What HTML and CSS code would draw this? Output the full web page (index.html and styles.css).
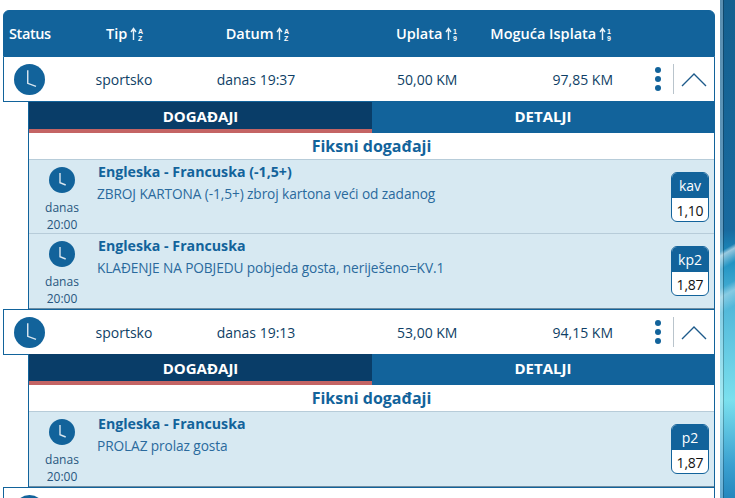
FILE: index.html
```html
<!DOCTYPE html>
<html lang="bs">
<head>
<meta charset="utf-8">
<title>Listići</title>
<link rel="stylesheet" href="styles.css">
</head>
<body>
<div class="page">
  <main class="list">
    <div class="head">
      <div class="c-status">Status</div>
      <div class="c-tip">Tip <svg class="sort" viewBox="0 0 14 14"><path d="M3.5 13V2.5M1 5l2.5-3.5L6 5"/><text x="8" y="6.5" class="sort-t">A</text><text x="8" y="13.5" class="sort-t">Z</text></svg></div>
      <div class="c-date">Datum <svg class="sort" viewBox="0 0 14 14"><path d="M3.5 13V2.5M1 5l2.5-3.5L6 5"/><text x="8" y="6.5" class="sort-t">A</text><text x="8" y="13.5" class="sort-t">Z</text></svg></div>
      <div class="c-pay">Uplata <svg class="sort" viewBox="0 0 14 14"><path d="M3.5 13V2.5M1 5l2.5-3.5L6 5"/><text x="8" y="6.5" class="sort-t">1</text><text x="8" y="13.5" class="sort-t">9</text></svg></div>
      <div class="c-win">Moguća Isplata <svg class="sort" viewBox="0 0 14 14"><path d="M3.5 13V2.5M1 5l2.5-3.5L6 5"/><text x="8" y="6.5" class="sort-t">1</text><text x="8" y="13.5" class="sort-t">9</text></svg></div>
    </div>

    <div class="row">
      <div class="c-status"><svg class="clock big" viewBox="0 0 30 30"><circle cx="15" cy="15" r="15"/><path d="M13.3 6V18.7L21.3 21.7"/></svg></div>
      <div class="c-tip">sportsko</div>
      <div class="c-date">danas 19:37</div>
      <div class="c-pay">50,00 KM</div>
      <div class="c-win">97,85 KM</div>
      <div class="actions">
        <span class="dots"><i></i><i></i><i></i></span>
        <span class="sep"></span>
        <svg class="chev" viewBox="0 0 26 16"><path d="M1 15 13 3l12 12"/></svg>
      </div>
    </div>
    <section class="detail">
      <div class="tabs"><div class="tab active">DOGAĐAJI</div><div class="tab">DETALJI</div></div>
      <h2 class="fixed">Fiksni događaji</h2>
      <div class="event">
        <div class="when"><svg class="clock small" viewBox="0 0 26 26"><circle cx="13" cy="13" r="13"/><path d="M11 6V15.7L16.7 18"/></svg><span>danas</span><span>20:00</span></div>
        <div class="info"><h3>Engleska - Francuska (-1,5+)</h3><p>ZBROJ KARTONA (-1,5+) zbroj kartona veći od zadanog</p></div>
        <div class="odd"><b>kav</b><span>1,10</span></div>
      </div>
      <div class="event">
        <div class="when"><svg class="clock small" viewBox="0 0 26 26"><circle cx="13" cy="13" r="13"/><path d="M11 6V15.7L16.7 18"/></svg><span>danas</span><span>20:00</span></div>
        <div class="info"><h3>Engleska - Francuska</h3><p>KLAĐENJE NA POBJEDU pobjeda gosta, neriješeno=KV.1</p></div>
        <div class="odd"><b>kp2</b><span>1,87</span></div>
      </div>
    </section>

    <div class="row">
      <div class="c-status"><svg class="clock big" viewBox="0 0 30 30"><circle cx="15" cy="15" r="15"/><path d="M13.3 6V18.7L21.3 21.7"/></svg></div>
      <div class="c-tip">sportsko</div>
      <div class="c-date">danas 19:13</div>
      <div class="c-pay">53,00 KM</div>
      <div class="c-win">94,15 KM</div>
      <div class="actions">
        <span class="dots"><i></i><i></i><i></i></span>
        <span class="sep"></span>
        <svg class="chev" viewBox="0 0 26 16"><path d="M1 15 13 3l12 12"/></svg>
      </div>
    </div>
    <section class="detail">
      <div class="tabs"><div class="tab active">DOGAĐAJI</div><div class="tab">DETALJI</div></div>
      <h2 class="fixed">Fiksni događaji</h2>
      <div class="event">
        <div class="when"><svg class="clock small" viewBox="0 0 26 26"><circle cx="13" cy="13" r="13"/><path d="M11 6V15.7L16.7 18"/></svg><span>danas</span><span>20:00</span></div>
        <div class="info"><h3>Engleska - Francuska</h3><p>PROLAZ prolaz gosta</p></div>
        <div class="odd"><b>p2</b><span>1,87</span></div>
      </div>
    </section>

    <div class="row">
      <div class="c-status"><svg class="clock big" viewBox="0 0 30 30"><circle cx="15" cy="15" r="15"/><path d="M13.3 6V18.7L21.3 21.7"/></svg></div>
    </div>
  </main>
  <aside class="desk"></aside>
</div>
</body>
</html>
```
FILE: styles.css
```css
* { box-sizing: border-box; }
html, body { margin: 0; height: 100%; overflow: hidden; background: #fff; }
body { font-family: "Open Sans", "Noto Sans", sans-serif; font-size: 14px; color: #0f3f66; }
.page { display: flex; height: 498px; overflow: hidden; }
.list { width: 712px; margin-left: 3px; padding-top: 10px; flex: none; }
.desk { flex: 1; margin-left: 5px; background:
  linear-gradient(90deg, rgba(255,255,255,.3) 3px, rgba(0,0,0,.25) 3px, rgba(0,0,0,.25) 4px, transparent 4px),
  linear-gradient(150deg, transparent 218px, rgba(255,255,255,.55) 222px, transparent 234px),
  linear-gradient(150deg, transparent 250px, rgba(255,255,255,.35) 258px, transparent 272px),
  linear-gradient(180deg, #14608f 0, #186a9f 230px, #1c8fc0 258px, #4fb5d8 300px, #7be0ee 400px, #3aa0d0 465px, #2487bd 498px); }
.head, .row { display: grid; grid-template-columns: 76px 90px 174px 136px 133px 1fr; align-items: center; border: 1px solid #12639b; }
.head { height: 47px; background: #12639b; border-radius: 6px 6px 0 0; color: #fff; font-weight: 600; font-size: 14.5px; }
.row { height: 45px; background: #fff; border-top: 0; font-size: 14px; }
.detail + .row { height: 46px; margin-bottom: -1px; border-top: 1px solid #12639b; }
.c-tip, .c-date { text-align: center; white-space: nowrap; }
.row .c-tip, .row .c-date { padding-right: 2px; }
.head .c-date { padding-left: 2px; }
.head .c-status { padding-left: 5px; letter-spacing: -.4px; }
.row .c-status { padding-left: 10px; }
.c-pay { padding-left: 52px; white-space: nowrap; }
.row .c-pay { padding-left: 53px; }
.c-win { text-align: right; white-space: nowrap; }
.sort { width: 14px; height: 14px; margin-left: -1px; vertical-align: -2px; }
.sort path { stroke: #e8f2f8; fill: none; stroke-width: 1.4; }
.sort-t { font: 700 7px "Liberation Sans", sans-serif; fill: #fff; }
.clock { display: block; fill: #12639b; }
.clock path { fill: none; stroke: #d9e6ef; stroke-width: 1.4; }
.clock.big { width: 31px; height: 31px; }
.clock.small { width: 26px; height: 26px; }
.actions { grid-column: 6; display: flex; align-items: center; justify-content: flex-end; padding-right: 7px; height: 30px; }
.dots { display: flex; flex-direction: column; gap: 3px; margin-right: 12px; }
.dots i { width: 6px; height: 6px; border-radius: 50%; background: #12639b; }
.sep { width: 1px; height: 30px; background: #b9c4cc; margin-right: 7px; }
.chev { width: 26px; height: 16px; fill: none; stroke: #1d5a8a; stroke-width: 1.4; }
.detail { margin-left: 25px; border-left: 1px solid #12639b; border-right: 1px solid #12639b; background: #fff; }
.tabs { display: flex; height: 31px; background: #12639b; color: #fff; font-weight: 700; font-size: 15px; }
.tab { flex: 1; display: flex; align-items: center; justify-content: center; padding-bottom: 4px; }
.tab.active { flex: none; width: 343px; background: #093d68; border-bottom: 4px solid #c46464; padding-bottom: 0; }
.fixed { margin: 0; height: 27px; line-height: 26px; text-align: center; font-size: 16px; font-weight: 700; color: #12639b; border-bottom: 1px solid #b7ccd9; }
.event { display: flex; height: 74px; background: #d7e9f2; border-bottom: 1px solid #b7ccd9; color: #12639b; }
.event:last-child { height: 75px; border-bottom: 1px solid #6f8ea3; }
.when { width: 66px; flex: none; display: flex; flex-direction: column; align-items: center; padding-top: 7px; font-size: 12px; line-height: 17px; color: #27567e; }
.when span:first-of-type { margin-top: 6px; }
.info { flex: 1; min-width: 0; padding-left: 2px; }
.info h3 { margin: 0; padding: 2px 0 0 1px; font-size: 14.2px; line-height: 20px; font-weight: 700; color: #12639b; }
.info p { margin: 2px 0 0; font-size: 13.7px; line-height: 20px; color: #2a6a9d; letter-spacing: -.1px; }
.odd { width: 38px; height: 50px; flex: none; align-self: center; margin-right: 5px; border: 1px solid #12639b; border-radius: 6px; overflow: hidden; display: flex; flex-direction: column; text-align: center; background: #fff; }
.odd b { height: 25px; background: #12639b; color: #fff; font-weight: 400; font-size: 14px; line-height: 25px; }
.odd span { flex: 1; font-size: 14px; line-height: 25px; color: #111; letter-spacing: -.2px; }
```
